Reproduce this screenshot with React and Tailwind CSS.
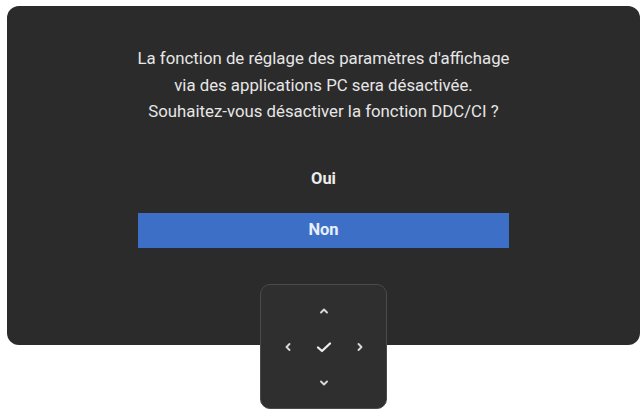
import React from 'react';

function Chevron({ d }) {
  return (
    <svg width="12" height="12" viewBox="0 0 12 12" fill="none" stroke="#d9d9d9" strokeWidth="1.9" strokeLinecap="round" strokeLinejoin="round">
      <path d={d} />
    </svg>
  );
}

export default function App() {
  return (
    <div className="relative w-[643px] h-[412px] bg-white overflow-hidden" style={{ fontFamily: 'Roboto, "Liberation Sans", sans-serif' }}>
      <div className="ml-[7px] mt-[6px] w-[633px] h-[339px] rounded-[12px] bg-[#2b2b2b] flex flex-col items-center pt-[39px]">
        <div className="text-center text-[16.8px] leading-[26.5px] text-[#e6e6e6]">
          <p>La fonction de réglage des paramètres d'affichage</p>
          <p>via des applications PC sera désactivée.</p>
          <p>Souhaitez-vous désactiver la fonction DDC/CI ?</p>
        </div>
        <div className="mt-[44px] text-[16.5px] font-bold text-[#ededed] leading-[20px]">Oui</div>
        <div className="mt-[24px] w-[371px] h-[35px] bg-[#3d6fc6] flex items-center justify-center text-[16.5px] font-bold text-[#e8eefa]">Non</div>
      </div>

      <div className="absolute left-[260px] top-[284px] w-[127px] h-[125px] rounded-[10px] bg-[#2f2f2f] border border-[#4a4a4a] grid grid-cols-[36px_36px_36px] grid-rows-[36px_36px_36px] place-content-center place-items-center">
        <div />
        <Chevron d="M3 7.5 L6 4.5 L9 7.5" />
        <div />
        <Chevron d="M7.5 3 L4.5 6 L7.5 9" />
        <svg width="18" height="14" viewBox="0 0 18 14" fill="none" stroke="#ededed" strokeWidth="2.3" strokeLinecap="round" strokeLinejoin="round">
          <path d="M3 7.5 L7 11 L15 3.5" />
        </svg>
        <Chevron d="M4.5 3 L7.5 6 L4.5 9" />
        <div />
        <Chevron d="M3 4.5 L6 7.5 L9 4.5" />
        <div />
      </div>
    </div>
  );
}
